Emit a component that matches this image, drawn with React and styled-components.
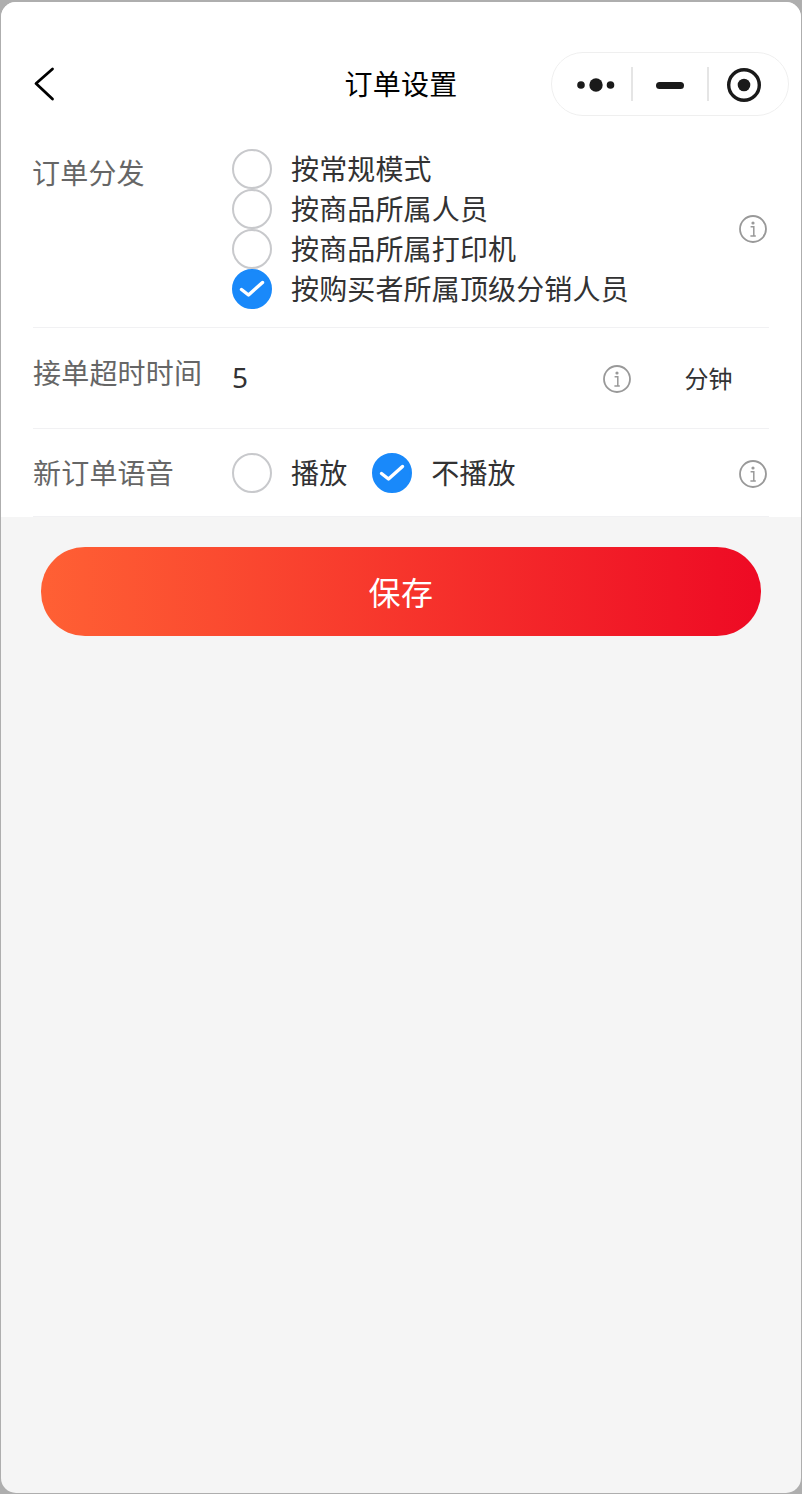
import React from 'react';
import styled, { createGlobalStyle } from 'styled-components';

const Global = createGlobalStyle`
  html, body { margin: 0; padding: 0; background: #b4b4b4; }
  * { box-sizing: border-box; }
`;

const Frame = styled.div`
  width: 802px;
  height: 1494px;
  padding: 2px 1px 1px 1px;
  background: #aeaeae;
  font-family: "Noto Sans CJK SC", "Noto Sans", sans-serif;
`;

const Screen = styled.div`
  height: 100%;
  display: flex;
  flex-direction: column;
  overflow: hidden;
  border-radius: 15px;
  background: #f5f5f5;
`;

const Panel = styled.div`
  background: #fff;
  display: flex;
  flex-direction: column;
`;

const NavBar = styled.header`
  height: 147px;
  display: grid;
  grid-template-columns: 1fr auto 1fr;
  align-items: center;
  padding: 50px 12px 47px 12px;
`;

const BackButton = styled.div`
  display: flex;
  align-items: center;
  margin-left: 20px;
`;

const Title = styled.h1`
  margin: 0 0 2px;
  font-size: 28px;
  font-weight: 400;
  line-height: 40px;
  letter-spacing: 0.2px;
  color: #000;
`;

const Capsule = styled.div`
  justify-self: end;
  width: 238px;
  height: 64px;
  border: 1px solid #efefef;
  border-radius: 32px;
  display: flex;
  align-items: center;
`;

const CapsuleCell = styled.div`
  width: ${p => p.$w}px;
  height: 34px;
  padding: 2px 0 0 ${p => p.$pl || 0}px;
  display: flex;
  align-items: center;
  justify-content: center;
  border-left: ${p => (p.$divided ? '2px solid #e5e5e5' : 'none')};
`;

const Row = styled.section`
  display: flex;
  height: ${p => p.$h}px;
  margin: 0 32px 0 32px;
  border-bottom: 1px solid #f1f1f3;
  align-items: ${p => (p.$top ? 'flex-start' : 'center')};
`;

const Label = styled.div`
  width: 199px;
  flex: none;
  font-size: 28px;
  line-height: 40px;
  letter-spacing: 0.2px;
  color: #666;
  transform: translate(${p => p.$dx || 0}px, ${p => p.$dy || 0}px);
`;

const OptionList = styled.div`
  flex: 1;
  display: flex;
  flex-direction: column;
`;

const OptionLine = styled.div`
  flex: 1;
  display: flex;
  align-items: center;
  gap: 25px;
`;

const Option = styled.div`
  display: flex;
  align-items: center;
  gap: 19px;
  height: 40px;
`;

const OptionText = styled.span`
  font-size: 28px;
  line-height: 40px;
  letter-spacing: 0.15px;
  margin-bottom: 2px;
  color: #323233;
`;

const RadioCircle = styled.span`
  width: 40px;
  height: 40px;
  flex: none;
  border-radius: 50%;
  border: 2px solid ${p => (p.$on ? '#1989fa' : '#c8c9cc')};
  background: ${p => (p.$on ? '#1989fa' : '#fff')};
  display: flex;
  align-items: center;
  justify-content: center;
`;

const InfoSlot = styled.div`
  flex: none;
  align-self: center;
  display: flex;
  margin: ${p => p.$mt ?? 2}px ${p => p.$mr ?? 2}px ${p => p.$mb || 0}px 0;
`;

const Value = styled.div`
  flex: 1;
  font-family: "Noto Sans", sans-serif;
  font-size: 28px;
  line-height: 40px;
  color: #323233;
  margin-bottom: 2px;
`;

const Unit = styled.div`
  width: 121px;
  flex: none;
  margin-left: 17px;
  text-align: center;
  font-size: 24px;
  line-height: 34px;
  color: #323233;
`;

const SaveButton = styled.button`
  margin: 30px 40px 0 40px;
  height: 88.5px;
  border: 0;
  border-radius: 44px;
  background: linear-gradient(to right, #ff6034, #ee0a24);
  color: #fff;
  font-family: inherit;
  font-size: 32px;
  letter-spacing: 0.4px;
  padding: 0;
`;

const Radio = ({ on }) => (
  <RadioCircle $on={on}>
    {on && (
      <svg width="26" height="20" viewBox="0 0 26 20" fill="none">
        <path d="M2.5 10.5 L9.5 16 L23.5 3.5" stroke="#fff" strokeWidth="3.4" strokeLinecap="round" strokeLinejoin="round" />
      </svg>
    )}
  </RadioCircle>
);

const Info = () => (
  <svg width="28" height="28" viewBox="0 0 28 28" fill="none">
    <circle cx="14" cy="14" r="13" stroke="#999" strokeWidth="1.8" />
    <circle cx="14" cy="8" r="1.6" fill="#999" />
    <path d="M11.6 11.8h3.2v9M11.4 21h5.4" stroke="#999" strokeWidth="1.5" />
  </svg>
);

const options = ['按常规模式', '按商品所属人员', '按商品所属打印机', '按购买者所属顶级分销人员'];

export default function App() {
  return (
    <Frame>
      <Global />
      <Screen>
        <Panel>
          <NavBar>
            <BackButton>
              <svg width="24" height="34" viewBox="0 0 24 34" fill="none">
                <path d="M19.5 2 L3 16.5 L19.5 32" stroke="#000" strokeWidth="2.8" strokeLinecap="round" strokeLinejoin="round" />
              </svg>
            </BackButton>
            <Title>订单设置</Title>
            <Capsule>
              <CapsuleCell $w={79} $pl={8}>
                <svg width="38" height="14" viewBox="0 0 38 14">
                  <circle cx="4" cy="7" r="3.8" fill="#1a1a1a" />
                  <circle cx="19" cy="7" r="6.7" fill="#1a1a1a" />
                  <circle cx="33.5" cy="7" r="3.8" fill="#1a1a1a" />
                </svg>
              </CapsuleCell>
              <CapsuleCell $w={76} $divided>
                <svg width="28" height="7" viewBox="0 0 28 7">
                  <rect width="28" height="7" rx="3.5" fill="#1a1a1a" />
                </svg>
              </CapsuleCell>
              <CapsuleCell $w={72} $divided>
                <svg width="36" height="36" viewBox="0 0 36 36" fill="none">
                  <circle cx="18" cy="18" r="15.3" stroke="#1a1a1a" strokeWidth="3.4" />
                  <circle cx="18" cy="18" r="6.3" fill="#1a1a1a" />
                </svg>
              </CapsuleCell>
            </Capsule>
          </NavBar>
          <Row $h={179} $top>
            <Label $dx={-1} $dy={3}>订单分发</Label>
            <OptionList>
              {options.map((o, i) => (
                <Option key={o}>
                  <Radio on={i === 3} />
                  <OptionText>{o}</OptionText>
                </Option>
              ))}
            </OptionList>
            <InfoSlot $mt={0} $mb={19}><Info /></InfoSlot>
          </Row>
          <Row $h={101}>
            <Label $dy={-6}>接单超时时间</Label>
            <Value>5</Value>
            <InfoSlot $mr={0}><Info /></InfoSlot>
            <Unit>分钟</Unit>
          </Row>
          <Row $h={88}>
            <Label $dy={-1}>新订单语音</Label>
            <OptionLine>
              <Option><Radio /><OptionText>播放</OptionText></Option>
              <Option><Radio on /><OptionText>不播放</OptionText></Option>
            </OptionLine>
            <InfoSlot><Info /></InfoSlot>
          </Row>
        </Panel>
        <SaveButton>保存</SaveButton>
      </Screen>
    </Frame>
  );
}
